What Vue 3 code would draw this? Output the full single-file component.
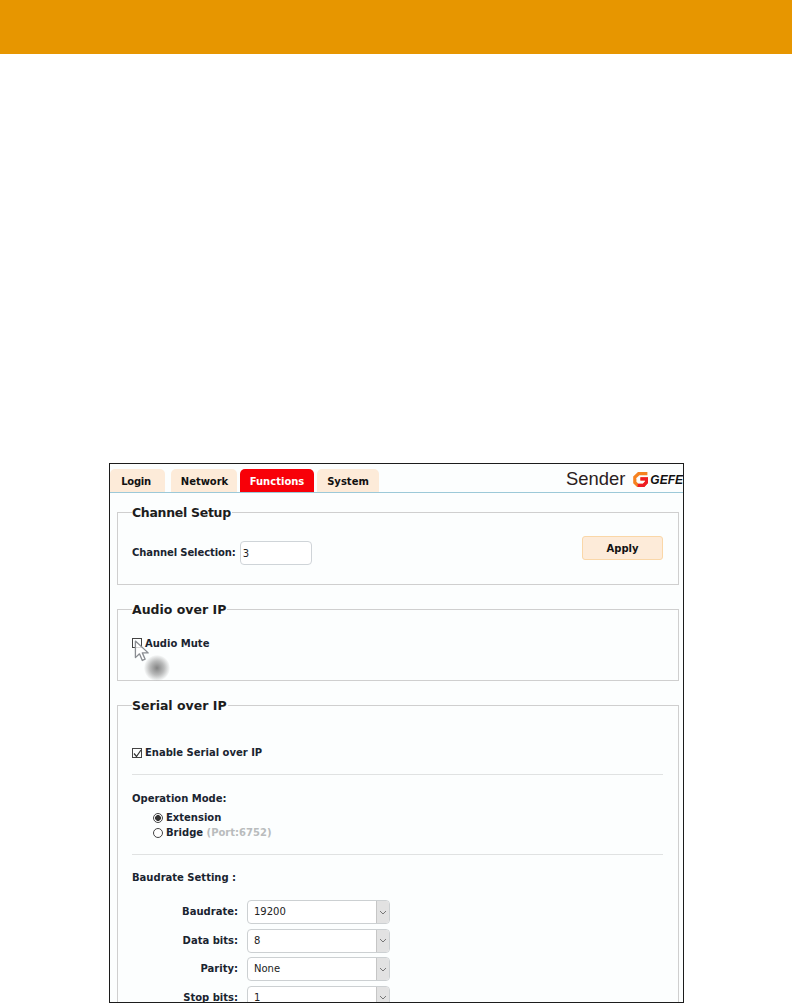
<script setup>
const rows = [
  { label: 'Baudrate:', value: '19200' },
  { label: 'Data bits:', value: '8' },
  { label: 'Parity:', value: 'None' },
  { label: 'Stop bits:', value: '1' }
]
const tabs = [
  { name: 'Login', cls: 'login' },
  { name: 'Network', cls: 'network' },
  { name: 'Functions', cls: 'functions' },
  { name: 'System', cls: 'system' }
]
</script>

<template>
  <div class="page">
    <header class="band"></header>
    <main class="frame">
      <nav class="topbar">
        <div v-for="t in tabs" :key="t.name" class="tab" :class="t.cls">{{ t.name }}</div>
        <div class="brand">
          <span class="sender">Sender</span>
          <svg class="logo" width="15" height="15" viewBox="0 0 15 15">
            <path d="M14.4 1.7H5.6L1.8 5.2v5.3l2.9 2.9h5.9l3-3.3V6.8H7.4" fill="none" stroke="#f58220" stroke-width="3.2"/>
            <path d="M4.7 13.4h5.9l3-3.3V6.8H7.4" fill="none" stroke="#ee1c25" stroke-width="3.2"/>
          </svg>
          <span class="gefen">GEFEN</span>
        </div>
      </nav>

      <fieldset class="box channel">
        <legend>Channel Setup</legend>
        <div class="channel-row">
          <label class="lbl">Channel Selection:</label>
          <input class="text-input" value="3" />
          <button class="apply">Apply</button>
        </div>
      </fieldset>

      <fieldset class="box audio">
        <legend>Audio over IP</legend>
        <div class="check-row">
          <span class="check"></span>
          <span class="lbl">Audio Mute</span>
          <div class="cursor-wrap">
            <div class="cursor-shadow"></div>
            <svg class="cursor" width="17" height="24" viewBox="0 0 18 24">
              <path d="M1.5 1.5V19l4.3-4 3 7 3-1.3-3-6.7h6.2z" fill="#fff" fill-opacity=".8" stroke="#8a8d92" stroke-width="1.4" stroke-linejoin="round"/>
            </svg>
          </div>
        </div>
      </fieldset>

      <fieldset class="box serial">
        <legend>Serial over IP</legend>
        <div class="check-row enable">
          <span class="check">
            <svg width="11" height="11" viewBox="0 0 11 11"><path d="M2 5.5l2.5 3L9 2" fill="none" stroke="#333" stroke-width="1.2"/></svg>
          </span>
          <span class="lbl">Enable Serial over IP</span>
        </div>
        <hr class="rule" />
        <div class="lbl mode-title">Operation Mode:</div>
        <div class="radio-row">
          <span class="radio on"></span><span class="lbl">Extension</span>
        </div>
        <div class="radio-row">
          <span class="radio"></span><span class="lbl">Bridge <span class="port">(Port:6752)</span></span>
        </div>
        <hr class="rule second" />
        <div class="lbl baud-title">Baudrate Setting :</div>
        <div class="form">
          <div v-for="r in rows" :key="r.label" class="form-row">
            <span class="lbl form-label">{{ r.label }}</span>
            <div class="select">
              <span class="select-val">{{ r.value }}</span>
              <span class="select-arrow">
                <svg width="8" height="5" viewBox="0 0 8 5"><path d="M1 1l3 3 3-3" fill="none" stroke="#777" stroke-width="1"/></svg>
              </span>
            </div>
          </div>
        </div>
      </fieldset>
    </main>
  </div>
</template>

<style>
html, body { margin: 0; background: #fff; overflow: hidden; }
</style>

<style scoped>
.page {
  width: 792px;
  height: 1003px;
  overflow: hidden;
  background: #fff;
  font-family: "DejaVu Sans", sans-serif;
}
.band { height: 54px; background: #e79600; }
.frame {
  box-sizing: border-box;
  width: 575px;
  height: 540px;
  margin: 409px 0 0 109px;
  border: 1px solid #1c1c1c;
  background: #fcfefe;
  overflow: hidden;
}
.topbar {
  box-sizing: border-box;
  display: flex;
  align-items: flex-end;
  height: 29px;
  border-bottom: 1px solid #9cc9d8;
}
.tab {
  height: 23px;
  box-sizing: border-box;
  border-radius: 5px 5px 0 0;
  background: #fdebd9;
  color: #111;
  font-size: 10px;
  font-weight: 700;
  line-height: 26px;
  text-align: center;
}
.login { width: 55px; margin-right: 6px; padding-right: 3px; letter-spacing: -0.3px; }
.network { width: 66px; margin-right: 3px; padding-left: 1px; letter-spacing: -0.05px; }
.functions { width: 74px; margin-right: 3px; background: #f80008; color: #fff; }
.system { width: 62px; }
.brand {
  margin-left: auto;
  display: flex;
  align-items: center;
  align-self: center;
  width: 117px;
  flex: none;
  white-space: nowrap;
  overflow: hidden;
  padding-top: 2px;
}
.sender {
  font-family: "Liberation Sans", sans-serif;
  font-size: 18.4px;
  line-height: 22px;
  color: #2a2020;
}
.logo { margin-left: 8px; flex: none; }
.gefen {
  font-family: "Liberation Sans", sans-serif;
  font-weight: 700;
  font-style: italic;
  font-size: 12px;
  line-height: 15px;
  color: #111;
  margin-left: 2px;
  padding-top: 2px;
}
.box {
  box-sizing: border-box;
  width: 562px;
  min-width: 0;
  margin: 0 0 0 7px;
  padding: 0 15px 0 14px;
  border: 1px solid #cfcfcf;
  border-radius: 0;
}
.box legend {
  padding: 0 1px 0 0;
  margin-left: 0;
  font-size: 12.5px;
  font-weight: 700;
  line-height: 15px;
  color: #1d1d1d;
}
.channel legend { letter-spacing: -0.3px; }
.channel { margin-top: 12px; height: 80px; }
.audio { margin-top: 17px; height: 79px; }
.serial { margin-top: 17px; height: 400px; }
.lbl {
  font-size: 10px;
  font-weight: 700;
  color: #1a2430;
  line-height: 12px;
  white-space: nowrap;
}
.channel-row {
  display: flex;
  align-items: center;
  padding-top: 21px;
}
.channel-row .lbl { letter-spacing: -0.1px; }
.text-input {
  box-sizing: border-box;
  width: 72px;
  height: 24px;
  margin-left: 4px;
  padding: 0 2px;
  border: 1px solid #cfd4d8;
  border-radius: 4px;
  background: #fff;
  font-family: "DejaVu Sans", sans-serif;
  font-size: 10px;
  color: #222;
  outline: none;
}
.apply {
  box-sizing: border-box;
  width: 81px;
  height: 24px;
  margin-left: auto;
  margin-top: -10px;
  padding: 0;
  border: 1px solid #fad7a8;
  border-radius: 3px;
  background: #fdebd9;
  font-family: "DejaVu Sans", sans-serif;
  font-size: 10px;
  font-weight: 700;
  color: #111;
}
.check-row {
  position: relative;
  display: flex;
  align-items: center;
  gap: 3px;
  padding-top: 21px;
}
.audio .check { margin-top: -2px; }
.check {
  box-sizing: border-box;
  display: flex;
  width: 10px;
  height: 10px;
  border: 1px solid #444;
  align-items: center;
  justify-content: center;
  flex: none;
}
.check svg { flex: none; }
.cursor-wrap {
  position: absolute;
  left: 2px;
  top: 22px;
  width: 40px;
  height: 40px;
}
.cursor { position: absolute; left: 0; top: 0; }
.cursor-shadow {
  position: absolute;
  left: 10px;
  top: 16px;
  width: 26px;
  height: 26px;
  border-radius: 50%;
  background: radial-gradient(circle, rgba(110,110,110,.85) 0%, rgba(130,130,130,.55) 38%, rgba(180,180,180,0) 72%);
}
.enable { padding-top: 34px; }
.rule {
  height: 1px;
  margin: 15px 0 0;
  border: 0;
  background: #e0e2e2;
}
.rule.second { margin-top: 14px; }
.mode-title { margin-top: 18px; }
.radio-row {
  display: flex;
  align-items: center;
  gap: 3px;
  padding-left: 21px;
  height: 15px;
}
.mode-title + .radio-row { margin-top: 5px; }
.radio {
  box-sizing: border-box;
  width: 10px;
  height: 10px;
  border: 1px solid #444;
  border-radius: 50%;
  background: #fff;
  flex: none;
}
.radio.on { background: radial-gradient(circle, #333 0, #333 2.6px, #fff 3.2px); }
.port { color: #b9bcbd; }
.baud-title { margin-top: 17px; }
.form { margin-top: 16px; display: flex; flex-direction: column; gap: 4.67px; }
.form-row { display: flex; align-items: center; }
.form-label { width: 106px; text-align: right; }
.select {
  box-sizing: border-box;
  display: flex;
  width: 143px;
  height: 24px;
  margin-left: 9px;
  border: 1px solid #ccd0d2;
  border-radius: 4px;
  background: #fff;
  overflow: hidden;
}
.select-val {
  flex: 1;
  padding-left: 6px;
  font-size: 10px;
  line-height: 22px;
  color: #222;
}
.select-arrow {
  display: flex;
  width: 12px;
  align-items: center;
  justify-content: center;
  background: #e2e2e2;
  border-left: 1px solid #c6c6c6;
}
</style>
